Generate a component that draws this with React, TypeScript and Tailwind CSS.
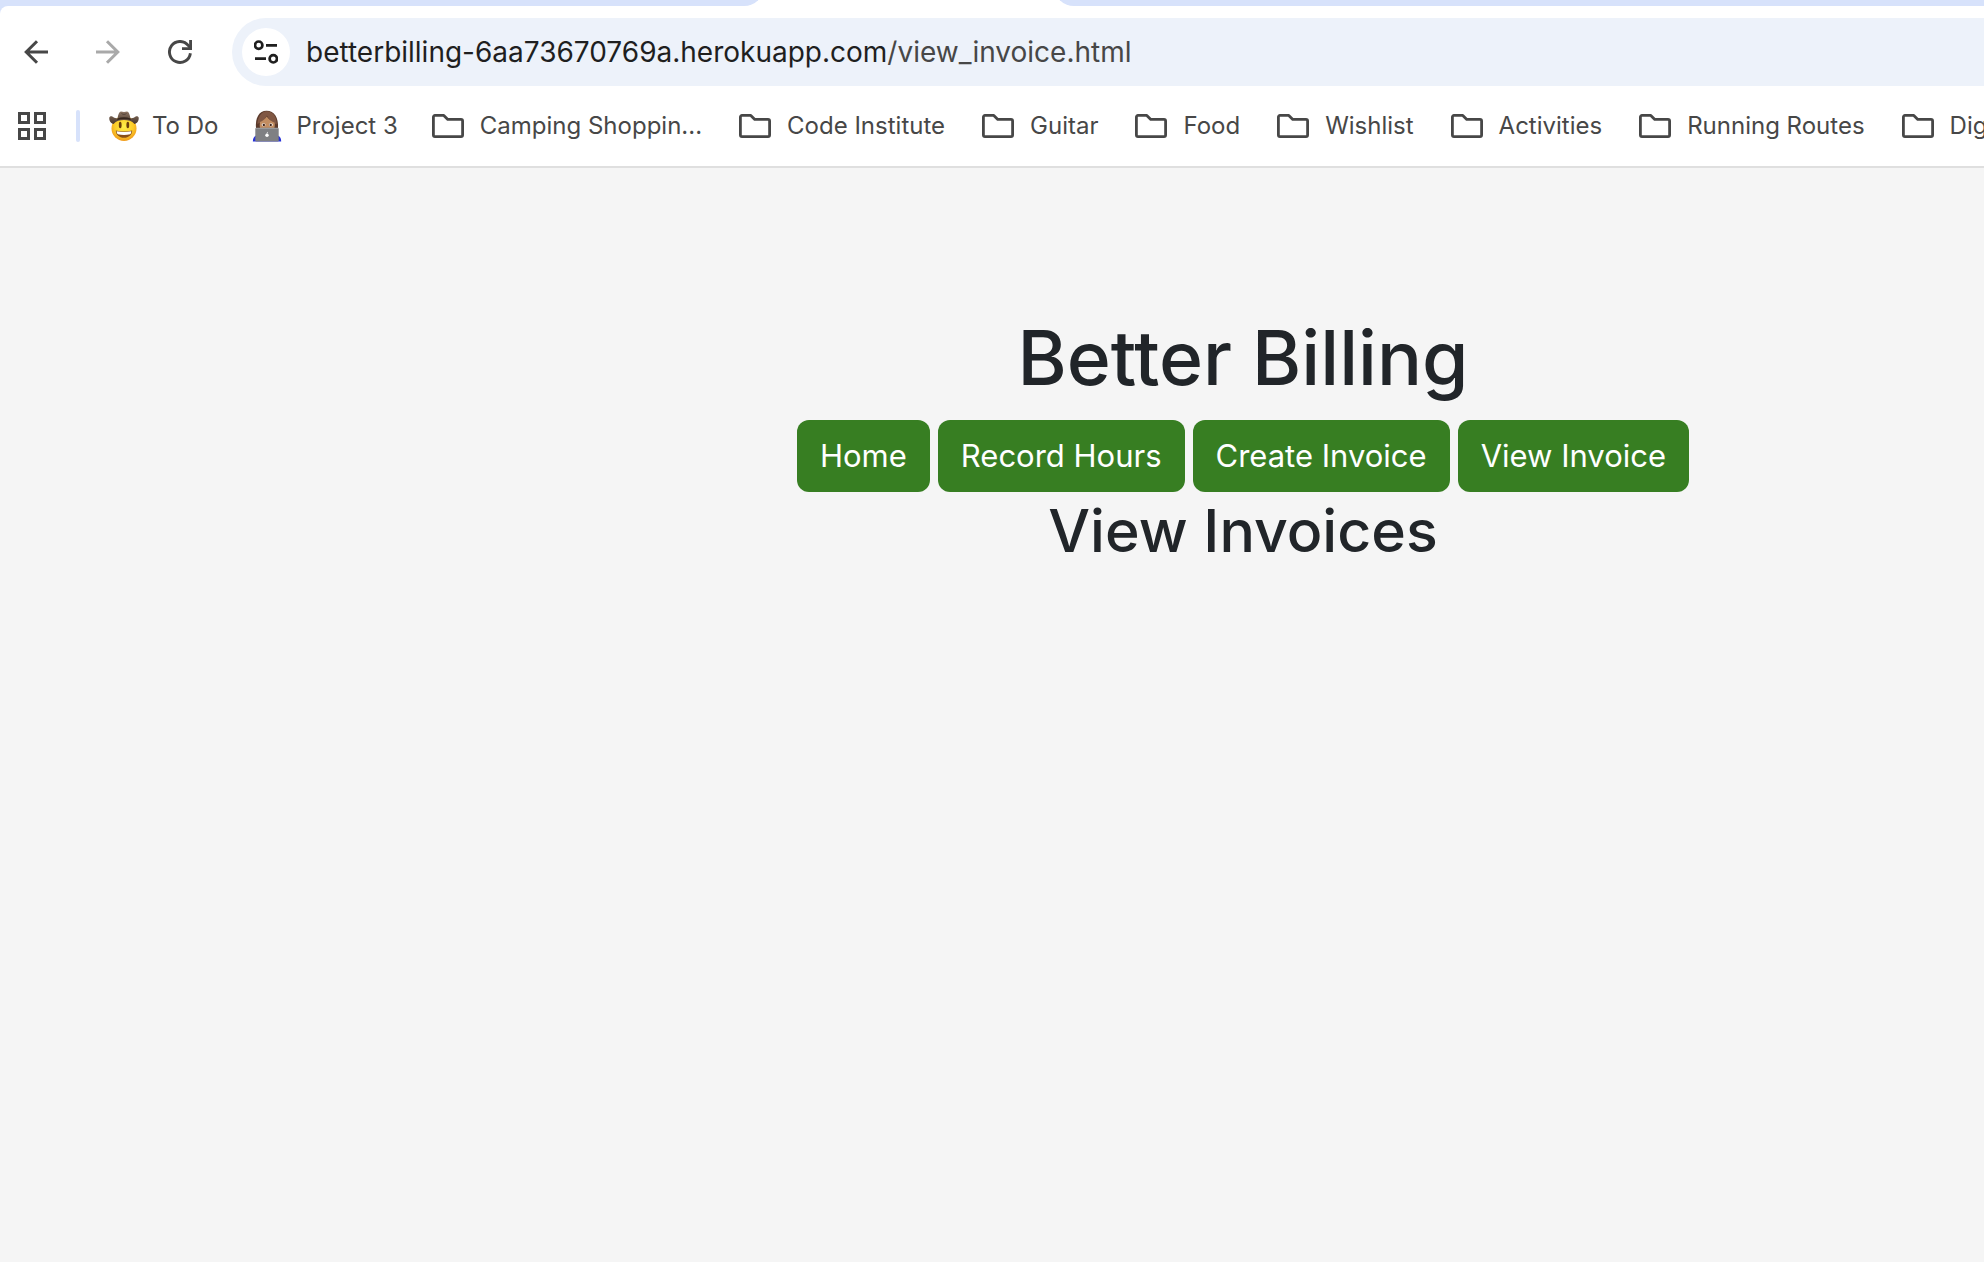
import React from "react";

const folders = [
  "Camping Shoppin...",
  "Code Institute",
  "Guitar",
  "Food",
  "Wishlist",
  "Activities",
  "Running Routes",
  "Dig",
];

const pages = ["Home", "Record Hours", "Create Invoice", "View Invoice"];

function ArrowIcon({ forward = false }: { forward?: boolean }) {
  return (
    <svg
      viewBox="0 0 24 24"
      fill="none"
      stroke="currentColor"
      strokeWidth="3"
      aria-hidden="true"
      className={forward ? "size-6 rotate-180" : "size-6"}
    >
      <path d="M24 12H2.5M13 1.2 2.2 12 13 22.8" />
    </svg>
  );
}

function ReloadIcon() {
  return (
    <svg viewBox="0 0 24 24" fill="none" stroke="currentColor" strokeWidth="2.9" aria-hidden="true" className="size-6">
      <path d="M22.4 13.2A10.5 10.5 0 1 1 20.2 5.4L23 8.6" />
      <path d="M22.6 0v8.6H14" />
    </svg>
  );
}

function TuneIcon() {
  return (
    <svg viewBox="0 0 24 24" fill="none" stroke="#1f1f1f" strokeWidth="2.7" aria-hidden="true" className="size-6">
      <circle cx="4.7" cy="5.2" r="3.7" />
      <path d="M12 5.3h11M1 18.7h11" />
      <circle cx="19.3" cy="18.8" r="3.7" />
    </svg>
  );
}

function GridIcon() {
  return (
    <svg viewBox="0 0 28 28" fill="none" stroke="#474747" strokeWidth="3" aria-hidden="true" className="size-7">
      <path d="M1.5 1.5h9v9h-9zM17.5 1.5h9v9h-9zM1.5 17.5h9v9h-9zM17.5 17.5h9v9h-9z" />
    </svg>
  );
}

function FolderIcon() {
  return (
    <svg
      viewBox="0 0 32 24"
      fill="none"
      stroke="#474747"
      strokeWidth="2.8"
      strokeLinejoin="round"
      aria-hidden="true"
      className="h-6 w-8 shrink-0"
    >
      <path d="M3 1.4h8.8l4 4H29a1.6 1.6 0 0 1 1.6 1.6v14a1.6 1.6 0 0 1-1.6 1.6H3A1.6 1.6 0 0 1 1.4 21V3A1.6 1.6 0 0 1 3 1.4z" />
    </svg>
  );
}

function CowboyIcon() {
  return (
    <svg viewBox="-1 -1 32 32" aria-hidden="true" className="size-8 shrink-0">
      <defs>
        <radialGradient id="face" cx="50%" cy="42%" r="58%">
          <stop offset="0" stopColor="#fff04a" />
          <stop offset="0.65" stopColor="#fccb28" />
          <stop offset="1" stopColor="#f09a1c" />
        </radialGradient>
        <linearGradient id="hat" x1="0" y1="0" x2="0" y2="1">
          <stop offset="0" stopColor="#8c7462" />
          <stop offset="1" stopColor="#49382d" />
        </linearGradient>
      </defs>
      <circle cx="15" cy="17.5" r="12.5" fill="url(#face)" />
      <ellipse cx="11.2" cy="14" rx="1.4" ry="3.3" fill="#6b3d0c" />
      <ellipse cx="18.8" cy="14" rx="1.4" ry="3.3" fill="#6b3d0c" />
      <path d="M6.8 19.5c5 1.2 11.4 1.2 16.4 0 0 4.3-3.5 7.3-8.2 7.3s-8.2-3-8.2-7.3z" fill="#8a4f16" />
      <path d="M7.7 20.3c4.8 1 9.8 1 14.6 0 0 1.5-.5 2.500-1.200 3-3.800.8-8.400.8-12.200 0-.7-.5-1.200-1.500-1.200-3z" fill="#fff" />
      <path
        d="M.3 6.500c1-2 3-1.600 5 .2l3.200.8C9.200 3.500 10 .6 12 .4c1 0 2 .7 3 .7s2-.7 3-.7c2 .2 2.800 3.100 3.500 7.100l3.200-.8c2-1.800 4-2.200 5-.2.400 3.500-2 6.300-4.200 6.400C23 10 19 9 15 9S7 10 4.500 12.900C2.300 12.800-.1 10 .3 6.500z"
        fill="url(#hat)"
      />
      <path d="M8.5 7.400c4-1.500 9-1.500 13 0l.2 1.500c-4-1.300-9.400-1.300-13.400 0z" fill="#35261e" />
      <path d="M12.5 2.500c1.500 1.200 3.500 1.200 5 0" stroke="#55443a" strokeWidth="1" fill="none" />
    </svg>
  );
}

function TechnologistIcon() {
  return (
    <svg viewBox="0 0 32 32" aria-hidden="true" className="size-8 shrink-0">
      <path d="M.8 31.500C1 27.500 2.500 25.500 6 25h18c3.500.5 5 2.500 5.200 6.500z" fill="#2630d8" />
      <path d="M4 18.500C3 8 7 .8 14.500.8c8 0 12 6.500 11.500 17.700z" fill="#5b3a2b" />
      <path d="M13 1.500c6-1.500 12 4 11.800 13-4-2-8-5-10-9-2 4-5 7-9.500 8.500C6 7 9 2.500 13 1.500z" fill="#805743" />
      <path d="M8 12c3-1.200 5.500-3.500 6.700-5.500 1.500 2.500 4.500 5 8 6.200.3 2.500 0 5-.7 6.300H8.500C7.700 17.500 7.500 15 8 12z" fill="#c28d61" />
      <ellipse cx="11.6" cy="14.8" rx="1.9" ry="1.5" fill="#fff" />
      <ellipse cx="18.9" cy="14.8" rx="1.9" ry="1.5" fill="#fff" />
      <circle cx="11.8" cy="14.9" r="1.2" fill="#40251a" />
      <circle cx="18.7" cy="14.9" r="1.2" fill="#40251a" />
      <rect x="3.3" y="17.8" width="23.4" height="13.7" rx="1.2" fill="#7f8083" />
      <path d="M4 18.4h22" stroke="#a3a4a7" strokeWidth="0.8" />
      <circle cx="15" cy="25.300" r="1.700" fill="#fff" />
      <path d="M15 23.600c0-.8.4-1.300 1-1.500" stroke="#fff" strokeWidth="0.700" fill="none" />
    </svg>
  );
}

function PageBookmark({ icon, label }: { icon: React.ReactNode; label: string }) {
  return (
    <a href="#" className="flex shrink-0 items-center gap-3 whitespace-nowrap">
      {icon}
      <span>{label}</span>
    </a>
  );
}

function FolderBookmark({ label }: { label: string }) {
  return (
    <button type="button" className="flex shrink-0 items-center gap-4 whitespace-nowrap">
      <FolderIcon />
      <span>{label}</span>
    </button>
  );
}

export default function App() {
  return (
    <div className="flex min-h-screen flex-col overflow-hidden bg-[#f5f5f5] font-['Inter','Liberation_Sans',sans-serif]">
      <header className="bg-[#d7e2fb]">
        <div className="flex h-1.5 items-end overflow-hidden bg-white">
          <div className="h-5 w-[764px] shrink-0 rounded-br-[20px] bg-[#d7e2fb]" />
          <div className="w-[290px] shrink-0" />
          <div className="h-5 flex-1 rounded-bl-[20px] bg-[#d7e2fb]" />
        </div>

        <div className="rounded-tl-lg border-b-2 border-[#dfdfdf] bg-white pt-3">
          <div className="flex items-center pl-6">
            <nav aria-label="History" className="flex gap-12 pr-10 text-[#474747]">
              <button type="button" aria-label="Back">
                <ArrowIcon />
              </button>
              <button type="button" aria-label="Forward" disabled className="text-[#a9a9a9]">
                <ArrowIcon forward />
              </button>
              <button type="button" aria-label="Reload">
                <ReloadIcon />
              </button>
            </nav>
            <div className="flex h-[68px] flex-1 items-center gap-4 rounded-l-full bg-[#edf2fa] pl-2.5">
              <button
                type="button"
                aria-label="View site information"
                className="flex size-12 items-center justify-center rounded-full bg-white"
              >
                <TuneIcon />
              </button>
              <a href="#" aria-label="Address" className="text-[28px] leading-9 text-[#474747]">
                <span className="text-[#1f1f1f]">betterbilling-6aa73670769a.herokuapp.com</span>
                /view_invoice.html
              </a>
            </div>
          </div>

          <nav
            aria-label="Bookmarks"
            className="flex h-20 items-center overflow-hidden pl-[18px] text-2xl text-[#474747]"
          >
            <button type="button" aria-label="Apps" className="shrink-0">
              <GridIcon />
            </button>
            <div className="mr-7 ml-[30px] h-8 w-1 shrink-0 rounded-sm bg-[#d7e2fb]" />
            <div className="flex shrink-0 gap-[34px] pr-[34px]">
              <PageBookmark icon={<CowboyIcon />} label="To Do" />
              <PageBookmark icon={<TechnologistIcon />} label="Project 3" />
            </div>
            <div className="flex gap-[37px]">
              {folders.map((name) => (
                <FolderBookmark key={name} label={name} />
              ))}
            </div>
          </nav>
        </div>
      </header>

      <main className="flex flex-col items-center pt-[144px] pl-[502px] text-[#212529]">
        <h1 className="text-[75px] leading-[92px] font-medium">Better Billing</h1>
        <nav aria-label="Main" className="mt-4 flex gap-2">
          {pages.map((name) => (
            <button
              key={name}
              type="button"
              className="h-[72px] rounded-xl bg-[#377e22] px-[23px] text-[31px] leading-12 text-white"
            >
              {name}
            </button>
          ))}
        </nav>
        <h2 className="text-[59px] leading-[78px] font-medium">View Invoices</h2>
      </main>
    </div>
  );
}
